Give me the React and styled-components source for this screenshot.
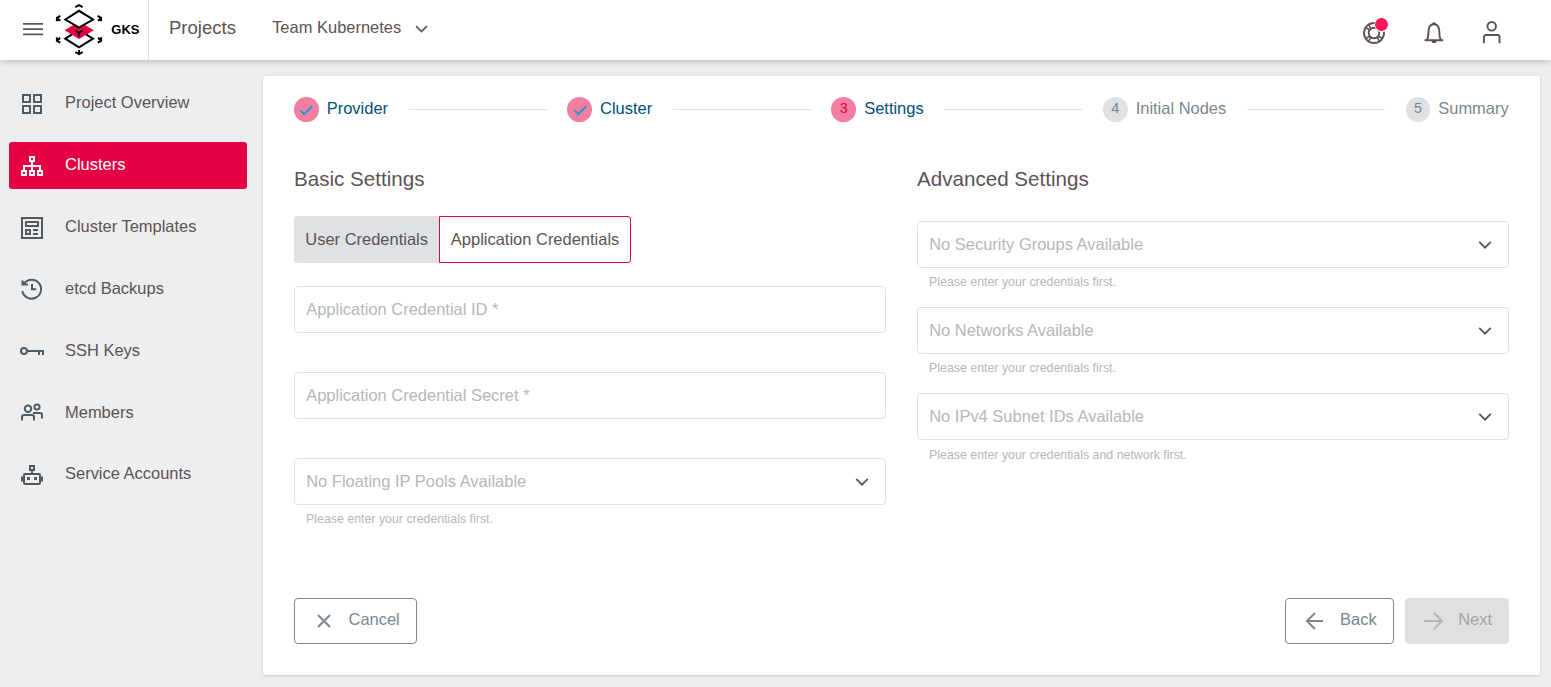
import React from 'react';
import styled, { createGlobalStyle, css } from 'styled-components';

const color = {
  accent: '#e50043',
  text: '#5d5354',
  icon: '#515b64',
  muted: '#7b8790',
  hint: '#b4b7bd',
  border: '#dfe2e5',
  page: '#edeef0',
  grey: '#dee2e5',
  link: '#00507a',
};

const GlobalStyle = createGlobalStyle`
  *, *::before, *::after { box-sizing: border-box; }
  html, body, #root { height: 100%; }
  body {
    margin: 0;
    overflow: hidden;
    background: ${color.page};
    color: ${color.text};
    font: 16.48px/20px "Liberation Sans", Arial, sans-serif;
  }
  button { font: inherit; }
`;

const Page = styled.div`
  display: flex;
  flex-direction: column;
  height: 100%;
`;

const Header = styled.header`
  position: relative;
  z-index: 1;
  flex: none;
  display: flex;
  align-items: center;
  height: 60px;
  background: #fff;
  box-shadow: 0 1px 7px rgba(0, 0, 0, 0.24);
`;

const Brand = styled.div`
  display: flex;
  align-items: center;
  width: 149px;
  height: 100%;
  padding-left: 23px;
  border-right: 1px solid ${color.grey};
`;

const BrandName = styled.span`
  margin-left: 8.3px;
  color: #000;
  font-size: 13px;
  font-weight: 700;
`;

const HeaderTitle = styled.span`
  margin: 0 36.2px 5px 20px;
  font-size: 18.54px;
`;

const ProjectSelect = styled.div`
  display: flex;
  align-items: center;
  gap: 13.8px;
  margin-bottom: 6px;
  svg { margin-top: 4px; }
`;

const HeaderActions = styled.div`
  display: flex;
  align-items: center;
  gap: 34px;
  margin: 6px 47.5px 0 auto;
`;

const ActionIcon = styled.div`
  position: relative;
  display: flex;
  margin-right: ${(p) => (p.$wide ? '2px' : 0)};
`;

const Dot = styled.span`
  position: absolute;
  top: -3px;
  right: -2.5px;
  width: 13px;
  height: 13px;
  border-radius: 50%;
  background: #ff1659;
`;

const Body = styled.div`
  flex: 1;
  display: flex;
  min-height: 0;
`;

const Sidebar = styled.nav`
  display: flex;
  flex-direction: column;
  gap: 15.48px;
  width: 263px;
  padding: 20.4px 16px 0 9px;
`;

const NavItem = styled.a`
  display: flex;
  align-items: center;
  gap: 21px;
  height: 46.35px;
  padding-left: 11px;
  border-radius: 3px;
  color: ${(p) => (p.$active ? '#fff' : color.text)};
  background: ${(p) => (p.$active ? color.accent : 'transparent')};
  svg {
    margin-top: 0.8px;
    color: ${(p) => (p.$active ? '#fff' : color.icon)};
  }
  span { margin-bottom: 2.2px; }
`;

const Card = styled.main`
  flex: 1;
  display: flex;
  flex-direction: column;
  margin: 16px 11px 12px 0;
  padding: 21px 31px 31px;
  border-radius: 3px;
  background: #fff;
  box-shadow: 0 1px 3px rgba(0, 0, 0, 0.16);
`;

const Stepper = styled.div`
  display: flex;
  align-items: center;
  height: 25px;
  margin-right: 0.3px;
`;

const Step = styled.div`
  display: flex;
  align-items: center;
  gap: 8px;
  color: ${(p) => (p.$reached ? color.link : color.muted)};
  > span:last-child { margin-bottom: 3.5px; }
`;

const StepBadge = styled.span`
  display: flex;
  align-items: center;
  justify-content: center;
  width: 24.72px;
  height: 24.72px;
  padding-bottom: ${(p) => (p.$done ? 0 : '3px')};
  border-radius: 50%;
  background: ${(p) => (p.$reached ? '#f27fa1' : color.grey)};
  color: ${(p) => (p.$reached ? color.accent : color.muted)};
  font-size: 14.42px;
`;

const StepLine = styled.div`
  flex: 1;
  height: 1px;
  margin: 0 20.6px;
  background: ${color.border};
`;

const Columns = styled.div`
  display: grid;
  grid-template-columns: 1fr 1fr;
  gap: 31px;
  margin-top: 44px;
`;

const SectionTitle = styled.h2`
  margin: 0;
  font-size: 20.6px;
  font-weight: 400;
  line-height: 25px;
`;

const ToggleGroup = styled.div`
  display: flex;
  margin: 25px 0 23px;
`;

const Toggle = styled.button`
  height: 47px;
  padding: 0 11px 1px;
  border: 1px solid ${(p) => (p.$active ? color.accent : color.grey)};
  border-radius: ${(p) => (p.$active ? '0 3px 3px 0' : '3px 0 0 3px')};
  background: ${(p) => (p.$active ? '#fff' : color.grey)};
  color: ${color.text};
  ${(p) => !p.$active && css`
    padding: 0 10.9px 1px 10.3px;
    border-right: 0;
  `}
`;

const Fields = styled.div`
  margin-top: ${(p) => (p.$top ? '30px' : 0)};
`;

const Field = styled.div`
  height: 86px;
`;

const Control = styled.div`
  display: flex;
  align-items: center;
  justify-content: space-between;
  height: 47px;
  padding: 0 16px 1px 11.2px;
  border: 1px solid ${color.border};
  border-radius: 4px;
  color: ${color.hint};
  svg { margin-top: 1px; color: ${color.text}; }
`;

const Hint = styled.div`
  margin: ${(p) => (p.$low ? '8px' : '7px')} 0 0 12.1px;
  color: ${color.hint};
  font-size: 12.36px;
  line-height: 14px;
`;

const Footer = styled.footer`
  display: flex;
  gap: 11px;
  margin-top: auto;
`;

const Button = styled.button`
  display: flex;
  align-items: center;
  gap: ${(p) => p.$gap || 14}px;
  width: ${(p) => p.$width}px;
  height: 46px;
  padding: 0 0 2px ${(p) => p.$inset || 17}px;
  border: 1px solid ${(p) => (p.disabled ? '#e0e0e0' : color.muted)};
  border-radius: 4px;
  background: ${(p) => (p.disabled ? '#e0e0e0' : '#fff')};
  color: ${(p) => (p.disabled ? '#a6a6a6' : color.muted)};
  margin-right: ${(p) => (p.$start ? 'auto' : 0)};
  svg { opacity: ${(p) => (p.disabled ? 0.7 : 1)}; }
  span { margin-bottom: 2px; }
`;

const Icon = ({ size = 24, width = size, height = size, box, sw = 2, children }) => (
  <svg
    width={width}
    height={height}
    viewBox={box || `0 0 ${width} ${height}`}
    fill="none"
    stroke="currentColor"
    strokeWidth={sw}
  >
    {children}
  </svg>
);

const Chevron = ({ size = 14, sw = 1.8 }) => (
  <Icon width={size} height={10} box="0 0 14 10" sw={sw}>
    <path d="M1.2 1.9 7 7.7l5.8-5.8" />
  </Icon>
);

const LogoMark = styled.svg`
  margin-left: 12px;
`;

const Logo = () => (
  <LogoMark width="48" height="54" viewBox="55 2.5 48 54" fill="none" stroke="#000" strokeWidth="2">
    <path d="M65.3 38.2 79 29.5 93 38.2 79 46.8Z" fill="#fff" />
    <path d="M64.6 29.7 79 21l14.8 8.7L79 38.6Z" fill={color.accent} stroke="none" />
    <path d="M65.3 19 79 10.3 93 19l-14 8Z" fill="#fff" />
    <path d="m75.6 30.2 3.4 2.2 3.4-2.2M79 32v4" />
    <path d="m75.3 6.7 3.7-2.1 3.7 2.1M75.3 51.5l3.7 2.2 3.7-2.2M79 49.5V54" />
    <path d="m60.3 15.4-3.4 1.9v3.5M57 17.6l3.2 2.6M97.7 15.4l3.4 1.9v3.5M101.2 17.6l-3.2 2.6" />
    <path d="m60.3 42.2-3.4-1.9v-3.5M57 40l3.2-2.6M97.7 42.2l3.4-1.9v-3.5M101.2 40 98 37.4" />
  </LogoMark>
);

const OverviewIcon = () => (
  <Icon>
    <path d="M3 3h7v7H3zM14 3h7v7h-7zM3 14h7v7H3zM14 14h7v7h-7z" />
  </Icon>
);

const ClustersIcon = () => (
  <Icon>
    <path d="M10 3h4v4h-4zM2 17h4v4H2zM10 17h4v4h-4zM18 17h4v4h-4zM12 7v10M4 17v-5h16v5" />
  </Icon>
);

const TemplatesIcon = () => (
  <Icon>
    <path d="M2 2h20v20H2zM6 6h12v4H6zM6 14h4v4H6zM13 14h5M13 18h5" />
  </Icon>
);

const BackupsIcon = () => (
  <Icon>
    <path d="M4.2 6.2A9.5 9.5 0 1 1 2.3 14M2.5 3.5v4H8M12 7v5.2h4.2" />
    <path d="M2 3.2 7.2 8H2z" fill="currentColor" stroke="none" />
  </Icon>
);

const KeyIcon = () => (
  <Icon>
    <circle cx="4" cy="12" r="3" />
    <path d="M7 12h17M23 12v4M19 12v4" />
  </Icon>
);

const MembersIcon = () => (
  <Icon>
    <circle cx="8" cy="7.8" r="3.2" />
    <circle cx="17" cy="6" r="2.6" />
    <path d="M2 19.6V16a2 2 0 0 1 2-2h8a2 2 0 0 1 2 2v3.6M13 12h7a2 2 0 0 1 2 2v3.6" />
  </Icon>
);

const RobotIcon = () => (
  <Icon>
    <path d="M10 3h4v4h-4zM12 7v4M5 11h14a1 1 0 0 1 1 1v8a1 1 0 0 1-1 1H5a1 1 0 0 1-1-1v-8a1 1 0 0 1 1-1zM2 13.5v5M22 13.5v5" />
    <path d="M7 14h3v3H7zM14 14h3v3h-3z" fill="currentColor" stroke="none" />
  </Icon>
);

const SupportIcon = () => (
  <Icon sw={1.9}>
    <circle cx="12" cy="12" r="10" />
    <circle cx="12" cy="12" r="5.3" />
    <path d="M3.7 6.5 7.8 9M6.5 3.7 9 7.8M6.5 20.3 9 16.2M3.7 17.5 7.8 15M17.5 20.3 15 16.2M20.3 17.5 16.2 15" strokeWidth="1.6" />
    <circle cx="20" cy="3.5" r="7.7" fill="#fff" stroke="none" />
  </Icon>
);

const BellIcon = () => (
  <Icon sw={1.9}>
    <path d="M2.6 19.3h18.6M4.7 19c1.6-1.7 1.7-3.5 1.7-7.5 0-5 2.1-8.2 5.5-8.2s5.5 3.2 5.5 8.2c0 4 .1 5.8 1.7 7.5" />
    <path d="M9.5 20h5a2.5 2.3 0 0 1-5 0zM10 3a2 1.8 0 0 1 4 0z" fill="currentColor" stroke="none" />
  </Icon>
);

const UserIcon = () => (
  <Icon sw={1.9}>
    <circle cx="11.7" cy="5.3" r="4.3" />
    <path d="M3.9 22.2V16a2 2 0 0 1 2-2h11.6a2 2 0 0 1 2 2v6.2" />
  </Icon>
);

const nav = [
  ['Project Overview', OverviewIcon],
  ['Clusters', ClustersIcon],
  ['Cluster Templates', TemplatesIcon],
  ['etcd Backups', BackupsIcon],
  ['SSH Keys', KeyIcon],
  ['Members', MembersIcon],
  ['Service Accounts', RobotIcon],
];

const steps = ['Provider', 'Cluster', 'Settings', 'Initial Nodes', 'Summary'];
const currentStep = 2;

const advanced = [
  ['No Security Groups Available', 'Please enter your credentials first.'],
  ['No Networks Available', 'Please enter your credentials first.'],
  ['No IPv4 Subnet IDs Available', 'Please enter your credentials and network first.'],
];

const SelectField = ({ label, hint, low }) => (
  <Field>
    <Control>
      <span>{label}</span>
      <Chevron />
    </Control>
    <Hint $low={low}>{hint}</Hint>
  </Field>
);

export default function App() {
  return (
    <Page>
      <GlobalStyle />
      <Header>
        <Brand>
          <Icon width={20} height={16} sw={1.8}>
            <path d="M0 1.8h20M0 7.1h20M0 12.3h20" />
          </Icon>
          <Logo />
          <BrandName>GKS</BrandName>
        </Brand>
        <HeaderTitle>Projects</HeaderTitle>
        <ProjectSelect>
          <span>Team Kubernetes</span>
          <Chevron size={13} />
        </ProjectSelect>
        <HeaderActions>
          <ActionIcon $wide>
            <SupportIcon />
            <Dot />
          </ActionIcon>
          <ActionIcon><BellIcon /></ActionIcon>
          <ActionIcon><UserIcon /></ActionIcon>
        </HeaderActions>
      </Header>
      <Body>
        <Sidebar>
          {nav.map(([label, NavIcon]) => (
            <NavItem key={label} $active={label === 'Clusters'}>
              <NavIcon />
              <span>{label}</span>
            </NavItem>
          ))}
        </Sidebar>
        <Card>
          <Stepper>
            {steps.map((label, i) => (
              <React.Fragment key={label}>
                {i > 0 && <StepLine />}
                <Step $reached={i <= currentStep}>
                  <StepBadge $reached={i <= currentStep} $done={i < currentStep}>
                    {i < currentStep ? (
                      <svg width="14" height="12" viewBox="0 0 14 12" fill="none" stroke="#1c9bd8" strokeWidth="1.9">
                        <path d="m1.2 6.2 4 4 8.1-7.9" />
                      </svg>
                    ) : i + 1}
                  </StepBadge>
                  <span>{label}</span>
                </Step>
              </React.Fragment>
            ))}
          </Stepper>
          <Columns>
            <section>
              <SectionTitle>Basic Settings</SectionTitle>
              <ToggleGroup>
                <Toggle>User Credentials</Toggle>
                <Toggle $active>Application Credentials</Toggle>
              </ToggleGroup>
              <Fields>
                <Field><Control>Application Credential ID *</Control></Field>
                <Field><Control>Application Credential Secret *</Control></Field>
                <SelectField label="No Floating IP Pools Available" hint="Please enter your credentials first." />
              </Fields>
            </section>
            <section>
              <SectionTitle>Advanced Settings</SectionTitle>
              <Fields $top>
                {advanced.map(([label, hint], i) => (
                  <SelectField key={label} label={label} hint={hint} low={i === 2} />
                ))}
              </Fields>
            </section>
          </Columns>
          <Footer>
            <Button $width={123} $inset={18} $gap={13.5} $start>
              <Icon width={22} height={20}>
                <path d="m5 5 12 12M17 5 5 17" />
              </Icon>
              <span>Cancel</span>
            </Button>
            <Button $width={109} $gap={15}>
              <Icon width={22} height={20}>
                <path d="M20 11H4M12 3l-8 8 8 8" />
              </Icon>
              <span>Back</span>
            </Button>
            <Button $width={104} $gap={13.2} disabled>
              <Icon width={22} height={20}>
                <path d="M1 11h18M11 3l8 8-8 8" />
              </Icon>
              <span>Next</span>
            </Button>
          </Footer>
        </Card>
      </Body>
    </Page>
  );
}
